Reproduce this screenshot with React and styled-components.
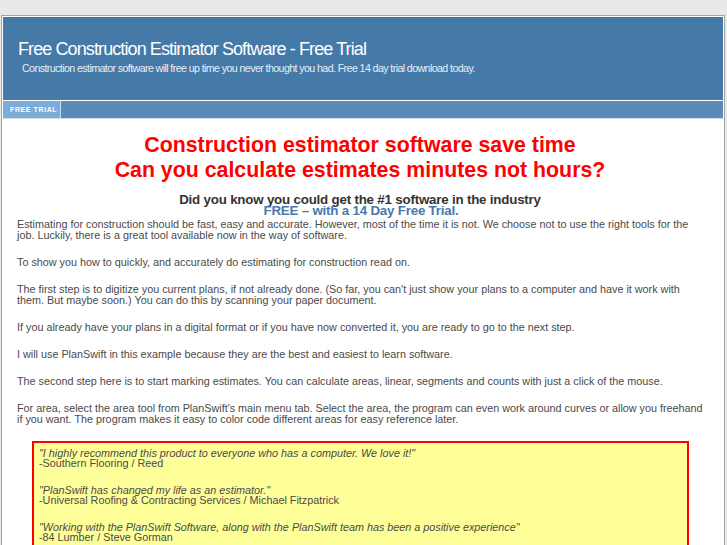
import React from "react";
import styled, { createGlobalStyle } from "styled-components";

const GlobalStyle = createGlobalStyle`
  html, body {
    margin: 0;
    padding: 0;
    background: #e9e9e9;
  }
  body {
    font-family: "Liberation Sans", Arial, sans-serif;
    overflow: hidden;
  }
`;

const Page = styled.div`
  padding-top: 15px;
  padding-left: 1px;
`;

const Wrapper = styled.div`
  width: 720px;
  background: #fff;
  border: 1px solid #a3a3a3;
  border-bottom: none;
  padding: 1px;
`;

const Header = styled.div`
  background: #4579a8;
  height: 83px;
  padding: 21px 0 0 15px;
  box-sizing: border-box;
  color: #fff;
`;

const SiteTitle = styled.h1`
  margin: 0;
  font-size: 18px;
  font-weight: normal;
  letter-spacing: -0.9px;
  line-height: 22px;
`;

const Tagline = styled.div`
  margin: 1px 0 0 4px;
  font-size: 8pt;
  letter-spacing: -0.6px;
  line-height: 14px;
  color: #e6eef6;
`;

const Nav = styled.div`
  display: flex;
  margin-top: 1px;
  height: 17px;
  background: #588bba;
  border-bottom: 1px solid #d4dfe9;
`;

const Tab = styled.a`
  display: flex;
  align-items: center;
  width: 58px;
  padding-left: 7px;
  box-sizing: border-box;
  background: #7dacd8;
  border-right: 1px solid #c9dbec;
  color: #fff;
  font-size: 7px;
  font-weight: bold;
  letter-spacing: 0.6px;
  text-decoration: none;
`;

const Content = styled.div`
  padding: 14px 20px 0 14px;
  color: #4a4a4a;
`;

const Headline = styled.h2`
  margin: 0;
  text-align: center;
  color: #ff0000;
  font-size: 16pt;
  line-height: 25px;
  font-weight: bold;
`;

const Pitch = styled.h3`
  margin: 11px 0 0;
  text-align: center;
  color: #333;
  font-size: 10pt;
  line-height: 11px;
  font-weight: bold;
  letter-spacing: -0.2px;
`;

const PitchLink = styled.span`
  display: block;
  color: #4679ae;
  padding-left: 2px;
`;

const Para = styled.p`
  margin: 3px 0 16px;
  font-size: 10.8px;
  line-height: 11px;
`;

const Testimonials = styled.div`
  margin: 0 14px 0 15px;
  padding: 5px 5px 20px;
  background: #ffff99;
  border: 2px solid #ff0000;
`;

const Quote = styled.p`
  margin: 0 0 17px;
  font-size: 10.8px;
  line-height: 10px;
  color: #4a4a4a;
`;

const Said = styled.em``;

const paragraphs = [
  "Estimating for construction should be fast, easy and accurate. However, most of the time it is not. We choose not to use the right tools for the job. Luckily, there is a great tool available now in the way of software.",
  "To show you how to quickly, and accurately do estimating for construction read on.",
  "The first step is to digitize you current plans, if not already done. (So far, you can't just show your plans to a computer and have it work with them. But maybe soon.) You can do this by scanning your paper document.",
  "If you already have your plans in a digital format or if you have now converted it, you are ready to go to the next step.",
  "I will use PlanSwift in this example because they are the best and easiest to learn software.",
  "The second step here is to start marking estimates. You can calculate areas, linear, segments and counts with just a click of the mouse.",
  "For area, select the area tool from PlanSwift's main menu tab. Select the area, the program can even work around curves or allow you freehand if you want. The program makes it easy to color code different areas for easy reference later.",
];

const quotes = [
  {
    text: "\"I highly recommend this product to everyone who has a computer. We love it!\"",
    who: "-Southern Flooring / Reed",
  },
  {
    text: "\"PlanSwift has changed my life as an estimator.\"",
    who: "-Universal Roofing & Contracting Services / Michael Fitzpatrick",
  },
  {
    text: "\"Working with the PlanSwift Software, along with the PlanSwift team has been a positive experience\"",
    who: "-84 Lumber / Steve Gorman",
  },
];

export default function App() {
  return (
    <>
      <GlobalStyle />
      <Page>
        <Wrapper>
          <Header>
            <SiteTitle>Free Construction Estimator Software - Free Trial</SiteTitle>
            <Tagline>
              Construction estimator software will free up time you never thought you had. Free 14 day trial download today.
            </Tagline>
          </Header>
          <Nav>
            <Tab href="#">FREE TRIAL</Tab>
          </Nav>
          <Content>
            <Headline>
              Construction estimator software save time
              <br />
              Can you calculate estimates minutes not hours?
            </Headline>
            <Pitch>
              Did you know you could get the #1 software in the industry
              <PitchLink>FREE – with a 14 Day Free Trial.</PitchLink>
            </Pitch>
            {paragraphs.map((p, i) => (
              <Para key={i}>{p}</Para>
            ))}
            <Testimonials>
              {quotes.map((q, i) => (
                <Quote key={i}>
                  <Said>{q.text}</Said>
                  <br />
                  {q.who}
                </Quote>
              ))}
            </Testimonials>
          </Content>
        </Wrapper>
      </Page>
    </>
  );
}
